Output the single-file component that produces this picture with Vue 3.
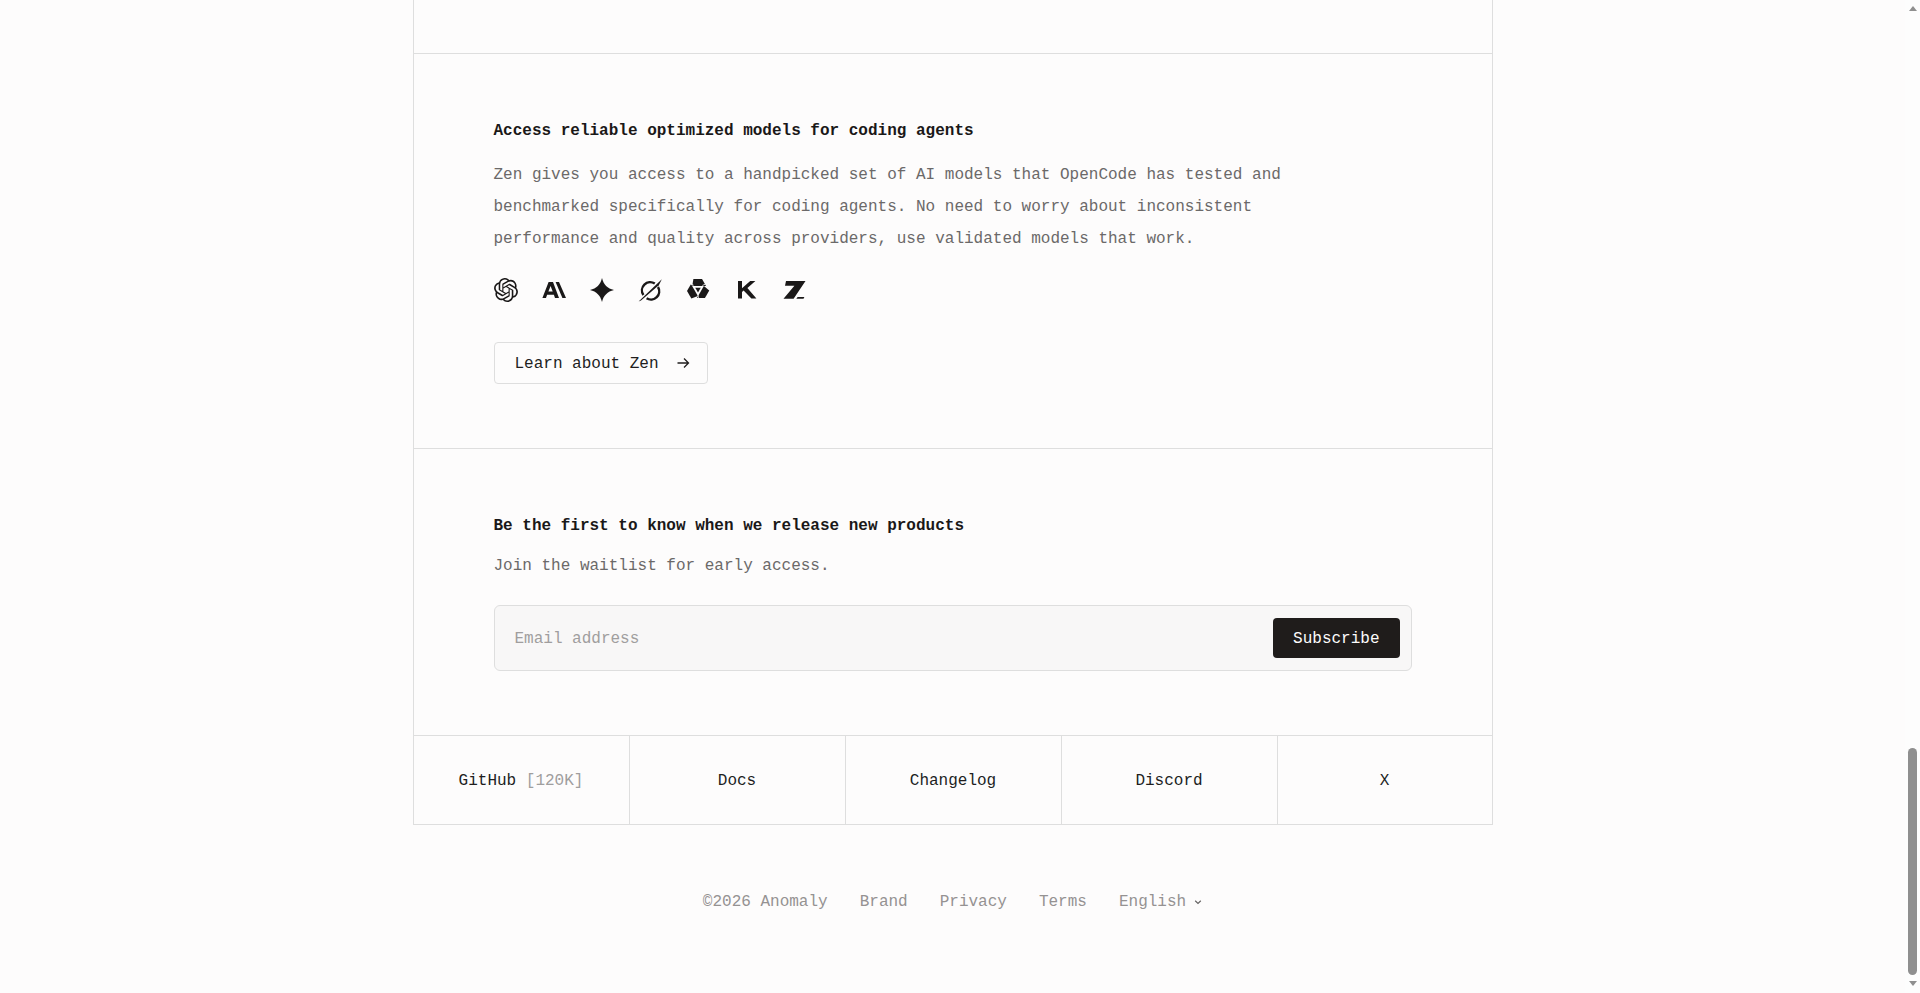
<script setup>
const icons = ['openai', 'anthropic', 'gemini', 'grok', 'qwen', 'kimi', 'zai']
const links = [
  { label: 'GitHub', extra: '[120K]' },
  { label: 'Docs' },
  { label: 'Changelog' },
  { label: 'Discord' },
  { label: 'X' }
]
const footerLinks = ['Brand', 'Privacy', 'Terms']
</script>

<template>
  <div class="page">
    <main class="main">
      <div class="frame">
        <div class="spacer"></div>

        <section class="section">
          <h2 class="title">Access reliable optimized models for coding agents</h2>
          <p class="text">
            Zen gives you access to a handpicked set of AI models that OpenCode has tested and
            benchmarked specifically for coding agents. No need to worry about inconsistent
            performance and quality across providers, use validated models that work.
          </p>
          <div class="models">
            <template v-for="icon in icons" :key="icon">
              <svg v-if="icon === 'openai'" class="model" viewBox="0 0 24 24">
                <path d="M22.2819 9.8211a5.9847 5.9847 0 0 0-.5157-4.9108 6.0462 6.0462 0 0 0-6.5098-2.9A6.0651 6.0651 0 0 0 4.9807 4.1818a5.9847 5.9847 0 0 0-3.9977 2.9 6.0462 6.0462 0 0 0 .7427 7.0966 5.98 5.98 0 0 0 .511 4.9107 6.051 6.051 0 0 0 6.5146 2.9001A5.9847 5.9847 0 0 0 13.2599 24a6.0557 6.0557 0 0 0 5.7718-4.2058 5.9894 5.9894 0 0 0 3.9977-2.9001 6.0557 6.0557 0 0 0-.7475-7.0729zm-9.022 12.6081a4.4755 4.4755 0 0 1-2.8764-1.0408l.1419-.0804 4.7783-2.7582a.7948.7948 0 0 0 .3927-.6813v-6.7369l2.02 1.1686a.071.071 0 0 1 .038.052v5.5826a4.504 4.504 0 0 1-4.4945 4.4944zm-9.6607-4.1254a4.4708 4.4708 0 0 1-.5346-3.0137l.142.0852 4.783 2.7582a.7712.7712 0 0 0 .7806 0l5.8428-3.3685v2.3324a.0804.0804 0 0 1-.0332.0615L9.74 19.9502a4.4992 4.4992 0 0 1-6.1408-1.6464zM2.3408 7.8956a4.485 4.485 0 0 1 2.3655-1.9728V11.6a.7664.7664 0 0 0 .3879.6765l5.8144 3.3543-2.0201 1.1685a.0757.0757 0 0 1-.071 0l-4.8303-2.7865A4.504 4.504 0 0 1 2.3408 7.872zm16.5963 3.8558L13.1038 8.364 15.1192 7.2a.0757.0757 0 0 1 .071 0l4.8303 2.7913a4.4944 4.4944 0 0 1-.6765 8.1042v-5.6772a.79.79 0 0 0-.407-.667zm2.0107-3.0231l-.142-.0852-4.7735-2.7818a.7759.7759 0 0 0-.7854 0L9.409 9.2297V6.8974a.0662.0662 0 0 1 .0284-.0615l4.8303-2.7866a4.4992 4.4992 0 0 1 6.6802 4.66zM8.3065 12.863l-2.02-1.1638a.0804.0804 0 0 1-.038-.0567V6.0742a4.4992 4.4992 0 0 1 7.3757-3.4537l-.142.0805L8.704 5.459a.7948.7948 0 0 0-.3927.6813zm1.0976-2.3654l2.602-1.4998 2.6069 1.4998v2.9994l-2.5974 1.4997-2.6067-1.4997Z" />
              </svg>
              <svg v-else-if="icon === 'anthropic'" class="model" viewBox="0 0 24 24">
                <path fill-rule="evenodd" d="M6.6 4h4.4l6 16h-4l-1.1-3.2H5.1L4 20H.4zM6.4 13.6h4.3L8.6 7.9z" />
                <path d="M13.6 4h3.4l7 16h-3.6z" />
              </svg>
              <svg v-else-if="icon === 'gemini'" class="model" viewBox="0 0 24 24">
                <path d="M12 0C13.5 6.5 17.5 10.5 24 12C17.5 13.5 13.5 17.5 12 24C10.5 17.5 6.5 13.5 0 12C6.5 10.5 10.5 6.5 12 0Z" />
              </svg>
              <svg v-else-if="icon === 'grok'" class="model" viewBox="0 0 24 24">
                <g fill="none" stroke="#1a1818" stroke-width="2.4">
                  <path d="M5.4 17A8.2 8.2 0 0 1 16.8 5.6" />
                  <path d="M20 9A8.2 8.2 0 0 1 8.6 20.2" />
                </g>
                <path d="M.6 23.6L23.8 1.2L20.8 7.2L3 22.6z" />
              </svg>
              <svg v-else-if="icon === 'qwen'" class="model" viewBox="0 0 24 24">
                <g transform="translate(-1.8 -1.3) scale(1.15)">
                  <path d="M8 2h7.5L19 8H7z" />
                  <path d="M8 2h7.5L19 8H7z" transform="rotate(120 12 11)" />
                  <path d="M8 2h7.5L19 8H7z" transform="rotate(240 12 11)" />
                  <path d="M9.6 9.6h4.8L12 13.8z" />
                  <path d="M5.2 6.2 8.2 7.4M18.6 6.4 15.8 7.6M12.6 20 12 16" fill="none" stroke="#fdfcfc" stroke-width=".7" />
                </g>
              </svg>
              <svg v-else-if="icon === 'kimi'" class="model" viewBox="0 0 24 24">
                <path d="M4 3h4v7.2L16.2 3h5.2l-8 7 9 10.6h-5L9.6 12.6 8 14v6.6H4z" />
              </svg>
              <svg v-else class="model" viewBox="0 0 24 24">
                <path d="M4 3h19.5L11.6 20.8H1.5L12.4 7.8H3z" />
                <path d="M15.6 19h6.8l-.9 1.8h-7.2z" />
              </svg>
            </template>
          </div>
          <a class="learn" href="#">
            <span>Learn about Zen</span>
            <svg class="arrow" viewBox="0 0 16 16" fill="none">
              <path d="M2.5 8h11M9 3.5 13.5 8 9 12.5" stroke="currentColor" stroke-width="1.3" />
            </svg>
          </a>
        </section>

        <section class="section">
          <h2 class="title">Be the first to know when we release new products</h2>
          <p class="text sub">Join the waitlist for early access.</p>
          <form class="subscribe" @submit.prevent>
            <input class="email" type="email" placeholder="Email address" />
            <button class="submit" type="submit">Subscribe</button>
          </form>
        </section>

        <nav class="links">
          <a v-for="link in links" :key="link.label" class="link" href="#">
            {{ link.label }}
            <span v-if="link.extra" class="extra">{{ link.extra }}</span>
          </a>
        </nav>
      </div>

      <footer class="legal">
        <span>©2026 Anomaly</span>
        <a v-for="item in footerLinks" :key="item" href="#">{{ item }}</a>
        <span class="lang">
          English
          <svg class="chev" viewBox="0 0 8 8" fill="none">
            <path d="M1.2 2.8 4 5.4l2.8-2.6" stroke="currentColor" stroke-width="1.2" />
          </svg>
        </span>
      </footer>
    </main>

    <div class="scrollbar">
      <i class="tri up"></i>
      <div class="track"><div class="thumb"></div></div>
      <i class="tri down"></i>
    </div>
  </div>
</template>

<style>
html, body {
  margin: 0;
  height: 100%;
  overflow: hidden;
  background: #fdfdfd;
}
</style>

<style scoped>
.page {
  display: flex;
  height: 100vh;
  overflow: hidden;
  background: #fdfcfc;
  font-family: 'Liberation Mono', 'DejaVu Sans Mono', monospace;
  font-size: 16px;
  color: #211e1e;
}

.main {
  flex: 1;
  min-width: 0;
}

.frame {
  width: 1080px;
  margin: 0 auto;
  box-sizing: border-box;
  border-left: 1px solid #dedede;
  border-right: 1px solid #dedede;
  border-bottom: 1px solid #dedede;
}

.spacer {
  height: 53px;
  border-bottom: 1px solid #dedede;
}

.section {
  padding: 65px 80px 64px;
  border-bottom: 1px solid #dedede;
}

.title {
  margin: 0;
  font-size: 16px;
  line-height: 24px;
  font-weight: 700;
  color: #1a1818;
}

.text {
  margin: 16px 0 0;
  max-width: 800px;
  line-height: 32px;
  color: #6b6969;
}

.sub {
  margin-top: 12px;
}

.models {
  display: flex;
  gap: 24px;
  margin-top: 23px;
}

.model {
  width: 24px;
  height: 24px;
  fill: #1a1818;
  flex: none;
}

.learn {
  display: inline-flex;
  align-items: center;
  gap: 16px;
  margin-top: 40px;
  padding: 9px 16px 7px 20px;
  border: 1px solid #dedede;
  border-radius: 4px;
  line-height: 24px;
  color: #211e1e;
  text-decoration: none;
  vertical-align: top;
}

.arrow {
  width: 16px;
  height: 16px;
  margin-top: -2px;
}

.subscribe {
  display: flex;
  align-items: center;
  margin-top: 23px;
  padding: 12px 11px 12px 20px;
  border: 1px solid #dedede;
  border-radius: 6px;
  background: #f8f7f7;
}

.email {
  flex: 1;
  min-width: 0;
  padding: 2px 0 0;
  border: none;
  outline: none;
  background: transparent;
  font: inherit;
  color: #211e1e;
}

.email::placeholder {
  color: #a09e9e;
  opacity: 1;
}

.submit {
  height: 40px;
  padding: 2px 20px 0;
  border: none;
  border-radius: 4px;
  background: #1f1c1b;
  color: #fdfcfc;
  font: inherit;
  font-weight: 500;
}

.links {
  display: grid;
  grid-template-columns: repeat(4, 216px) 1fr;
}

.link {
  display: flex;
  align-items: center;
  justify-content: center;
  gap: 9.6px;
  height: 88px;
  padding-top: 2px;
  box-sizing: border-box;
  color: #211e1e;
  text-decoration: none;
  border-right: 1px solid #dedede;
}

.link:last-child {
  border-right: none;
}

.extra {
  color: #a09e9e;
}

.legal {
  display: flex;
  justify-content: center;
  gap: 32px;
  margin-top: 65px;
  line-height: 24px;
  color: #959292;
}

.legal a {
  color: inherit;
  text-decoration: none;
}

.lang {
  display: inline-flex;
  align-items: center;
  gap: 8px;
}

.chev {
  width: 8px;
  height: 8px;
  color: #656363;
}

.scrollbar {
  flex: none;
  width: 15px;
  display: flex;
  flex-direction: column;
  align-items: center;
  padding: 6px 0 7px;
  box-sizing: border-box;
  background: #fdfdfd;
}

.track {
  flex: 1;
  width: 100%;
  display: flex;
  flex-direction: column;
  justify-content: flex-end;
  align-items: center;
  padding-bottom: 6px;
}

.thumb {
  width: 9px;
  height: 227px;
  border-radius: 5px;
  background: #8f8f8f;
}

.tri {
  width: 0;
  height: 0;
  border-left: 4.5px solid transparent;
  border-right: 4.5px solid transparent;
}

.tri.up {
  border-bottom: 5px solid #8f8f8f;
}

.tri.down {
  border-top: 5px solid #8f8f8f;
}
</style>
